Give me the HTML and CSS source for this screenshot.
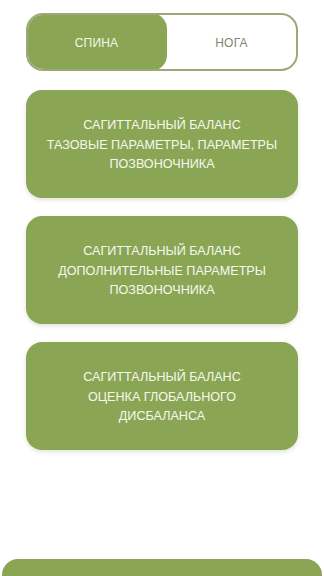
FILE: index.html
```html
<!DOCTYPE html>
<html lang="ru">
<head>
    <meta charset="UTF-8">
    <meta name="viewport" content="width=device-width, initial-scale=1.0">
    <title>Сагиттальный баланс</title>
    <link rel="stylesheet" href="styles.css">
</head>
<body>
    <div class="pagina">
        <div class="toggle">
            <button class="seg ativo">СПИНА</button>
            <button class="seg">НОГА</button>
        </div>

        <div class="lista">
            <button class="cartao">САГИТТАЛЬНЫЙ БАЛАНС<br>ТАЗОВЫЕ ПАРАМЕТРЫ, ПАРАМЕТРЫ<br>ПОЗВОНОЧНИКА</button>
            <button class="cartao">САГИТТАЛЬНЫЙ БАЛАНС<br>ДОПОЛНИТЕЛЬНЫЕ ПАРАМЕТРЫ<br>ПОЗВОНОЧНИКА</button>
            <button class="cartao">САГИТТАЛЬНЫЙ БАЛАНС<br>ОЦЕНКА ГЛОБАЛЬНОГО<br>ДИСБАЛАНСА</button>
        </div>
    </div>
    <div class="rodape"></div>
</body>
</html>
```

FILE: styles.css
```css
*{
    margin: 0;
    padding: 0;
    box-sizing: border-box;
}
body{
    width: 324px;
    height: 576px;
    overflow: hidden;
    background-color: #fff;
    font-family: "Liberation Sans", Arial, sans-serif;
}
.pagina{
    padding: 13px 26px 0 26px;
    height: 559px;
}
.toggle{
    display: flex;
    height: 58px;
    border: 2px solid #9da878;
    border-radius: 17px;
    overflow: hidden;
}
.seg{
    flex: 1;
    border: none;
    background-color: transparent;
    font-family: inherit;
    font-size: 12px;
    color: #80876c;
    letter-spacing: 0.2px;
    padding-top: 2px;
}
.seg.ativo{
    flex: 0 0 141px;
    margin: -2px 0 -2px -2px;
    background-color: #8aa655;
    color: #f3f6ea;
    border-radius: 16px;
}
.lista{
    display: flex;
    flex-direction: column;
    gap: 18px;
    margin-top: 19px;
}
.cartao{
    height: 108px;
    border: none;
    border-radius: 16px;
    background-color: #8aa655;
    color: #f6f8ef;
    font-family: inherit;
    font-size: 12.6px;
    line-height: 19.5px;
    text-align: center;
    padding-top: 3px;
    box-shadow: 0 2px 4px rgba(90, 100, 60, 0.18);
}
.rodape{
    margin: 0 2px;
    height: 40px;
    background-color: #8aa655;
    border-radius: 16px 16px 0 0;
}
```
